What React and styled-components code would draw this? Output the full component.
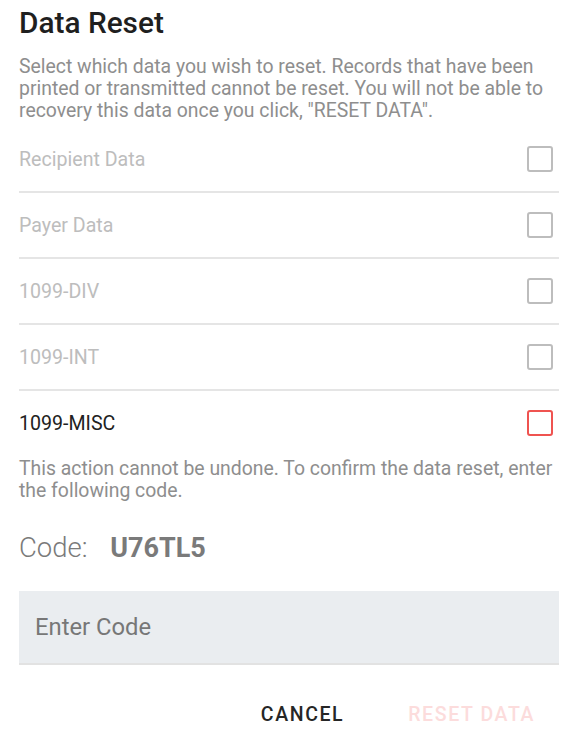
import React from "react";
import styled, { createGlobalStyle } from "styled-components";

const GlobalStyle = createGlobalStyle`
  body {
    margin: 0;
    background: #ffffff;
    font-family: Roboto, "Noto Sans", sans-serif;
  }
`;

const items = [
  { label: "Recipient Data", enabled: false },
  { label: "Payer Data", enabled: false },
  { label: "1099-DIV", enabled: false },
  { label: "1099-INT", enabled: false },
  { label: "1099-MISC", enabled: true },
];

const App = () => {
  return (
    <>
      <GlobalStyle />
      <Dialog>
        <Title>Data Reset</Title>
        <Text>
          Select which data you wish to reset. Records that have been printed or
          transmitted cannot be reset. You will not be able to recovery this data
          once you click, "RESET DATA".
        </Text>
        <List>
          {items.map((item) => (
            <Row key={item.label}>
              <RowLabel enabled={item.enabled}>{item.label}</RowLabel>
              <Check enabled={item.enabled} />
            </Row>
          ))}
        </List>
        <Note>
          This action cannot be undone. To confirm the data reset, enter the
          following code.
        </Note>
        <CodeLine>
          Code: <b>U76TL5</b>
        </CodeLine>
        <Input placeholder="Enter Code" />
        <Actions>
          <Btn>Cancel</Btn>
          <Btn disabled danger>
            Reset Data
          </Btn>
        </Actions>
      </Dialog>
    </>
  );
};

export default App;

const Dialog = styled.div`
  width: 540px;
  padding: 0 26px 0 19px;
  display: flex;
  flex-direction: column;
`;
const Title = styled.h2`
  margin: 6px 0 0;
  font-size: 29.8px;
  font-weight: 500;
  line-height: 34px;
  color: #1f1f1f;
`;
const Text = styled.p`
  margin: 16px 0 0;
  font-size: 19.4px;
  line-height: 22px;
  color: #8e8e8e;
`;
const Note = styled(Text)`
  margin-top: 3px;
`;
const List = styled.div`
  display: flex;
  flex-direction: column;
  margin-top: 5px;
`;
const Row = styled.div`
  height: 64px;
  display: flex;
  align-items: center;
  justify-content: space-between;
  border-bottom: 2px solid #e5e5e5;

  &:last-child {
    border-bottom: 0;
  }
`;
const RowLabel = styled.span`
  font-size: 19.6px;
  color: ${(p) => (p.enabled ? "#212121" : "#bdbdbd")};
`;
const Check = styled.span`
  width: 22px;
  height: 22px;
  margin-right: 6px;
  border: 2.5px solid ${(p) => (p.enabled ? "#ef5350" : "#bdbdbd")};
  border-radius: 3px;
`;
const CodeLine = styled.div`
  margin-top: 30px;
  font-size: 27.5px;
  font-weight: 300;
  color: #7a7a7a;
  line-height: 32px;

  b {
    font-size: 27px;
    font-weight: 700;
    margin-left: 16px;
  }
`;
const Input = styled.input`
  margin-top: 27px;
  height: 74px;
  box-sizing: border-box;
  border: 0;
  border-bottom: 2px solid #e2e2e2;
  background: #eaedf0;
  padding: 0 16px;
  font-family: Roboto, "Noto Sans", sans-serif;
  font-size: 23.8px;
  color: #333;
  outline: none;

  &::placeholder {
    color: #777777;
  }
`;
const Actions = styled.div`
  display: flex;
  justify-content: flex-end;
  gap: 48px;
  margin-top: 30px;
  padding-right: 16px;
`;
const Btn = styled.button`
  background: none;
  border: 0;
  padding: 8px;
  font-family: Roboto, "Noto Sans", sans-serif;
  font-size: 19.5px;
  line-height: 23px;
  font-weight: 500;
  letter-spacing: 1.6px;
  text-transform: uppercase;
  color: ${(p) => (p.danger ? "#fcdcdc" : "#262626")};
  cursor: pointer;

  &:disabled {
    cursor: default;
  }
`;
